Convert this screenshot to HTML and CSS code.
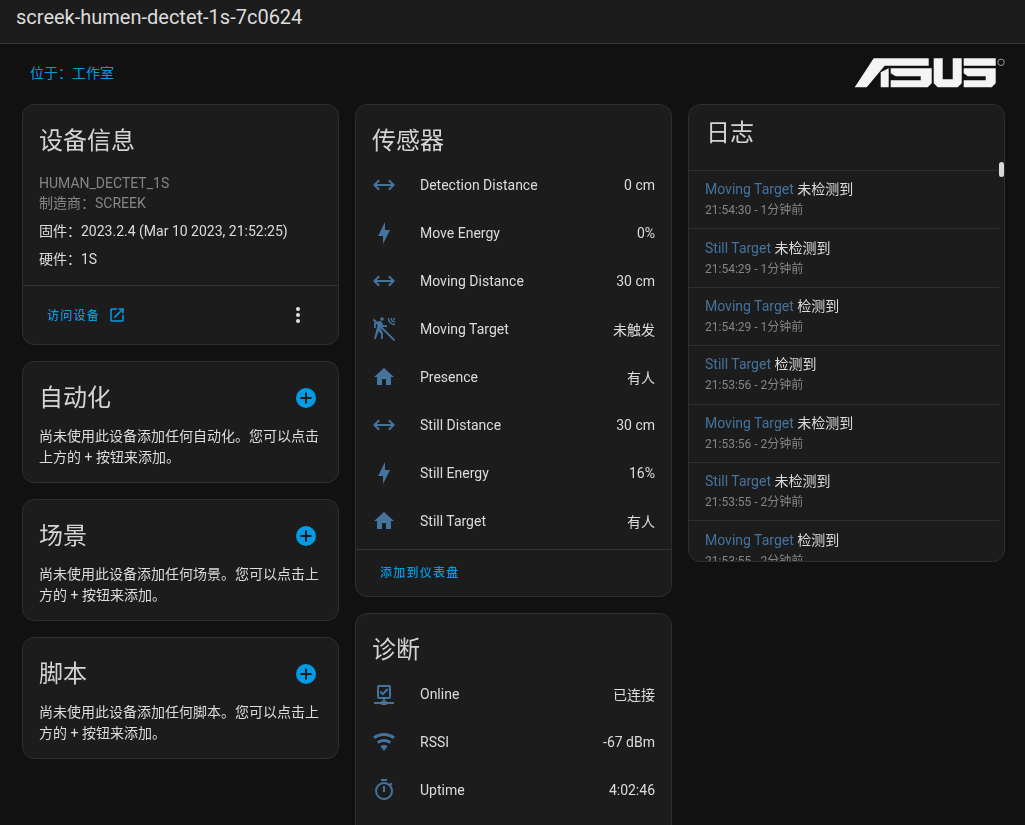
FILE: index.html
```html
<!DOCTYPE html>
<html lang="zh-CN">
<head>
    <meta charset="UTF-8">
    <meta name="viewport" content="width=device-width, initial-scale=1.0">
    <title>screek-humen-dectet-1s-7c0624</title>
    <link rel="stylesheet" href="styles.css">
</head>
<body>
    <header class="topbar">screek-humen-dectet-1s-7c0624</header>
    <div class="subbar">
        <a class="area">位于：工作室</a>
        <svg class="logo" viewBox="0 0 152 31">
            <g fill="#f4f4f4" transform="translate(.7 1.3)">
                <polygon points="0,29 12,29 30,7.500 74,7.500 74,0 19,0"/>
                <polygon points="26,14 34,10 34,29 26,29"/>
                <polygon points="36,10 77,10 77,25 73,29 36,29 36,22 66,22 66,18 41,18 36,15"/>
                <polygon points="79,0 88,0 88,21 98,21 98,0 107,0 107,25 103,29 83,29 79,25"/>
                <polygon points="109,0 141,0 141,7.500 109,7.500"/>
                <polygon points="109,10 141,10 141,25 137,29 109,29 109,22 131,22 131,18 113,18 109,15"/>
            </g>
            <circle cx="147" cy="5.300" r="3.200" fill="none" stroke="#999" stroke-width="1"/>
        </svg>
    </div>
    <main class="columns">
        <div class="column">
            <section class="card">
                <h2 class="card-title">设备信息</h2>
                <div class="info">
                    <div class="muted">HUMAN_DECTET_1S</div>
                    <div class="muted">制造商：SCREEK</div>
                    <div class="info-line">固件：2023.2.4 (Mar 10 2023, 21:52:25)</div>
                    <div class="info-line">硬件：1S</div>
                </div>
                <div class="actions actions-device">
                    <a class="btn">访问设备
                        <svg class="icon-open" viewBox="0 0 24 24"><path d="M14,3V5H17.59L7.76,14.83L9.17,16.24L19,6.41V10H21V3M19,19H5V5H12V3H5C3.89,3 3,3.9 3,5V19A2,2 0 0,0 5,21H19A2,2 0 0,0 21,19V12H19V19Z"/></svg>
                    </a>
                    <svg class="icon-more" viewBox="0 0 24 24"><path d="M12,16A2,2 0 0,1 14,18A2,2 0 0,1 12,20A2,2 0 0,1 10,18A2,2 0 0,1 12,16M12,10A2,2 0 0,1 14,12A2,2 0 0,1 12,14A2,2 0 0,1 10,12A2,2 0 0,1 12,10M12,4A2,2 0 0,1 14,6A2,2 0 0,1 12,8A2,2 0 0,1 10,6A2,2 0 0,1 12,4Z"/></svg>
                </div>
            </section>
            <section class="card empty-card">
                <div class="empty-head">
                    <h2 class="card-title">自动化</h2>
                    <svg class="icon-add" viewBox="0 0 20 20"><circle cx="10" cy="10" r="10"/><path d="M9 4.5h2V9h4.5v2H11v4.5H9V11H4.500V9H9z"/></svg>
                </div>
                <p class="empty-text">尚未使用此设备添加任何自动化。您可以点击上方的 + 按钮来添加。</p>
            </section>
            <section class="card empty-card">
                <div class="empty-head">
                    <h2 class="card-title">场景</h2>
                    <svg class="icon-add" viewBox="0 0 20 20"><circle cx="10" cy="10" r="10"/><path d="M9 4.5h2V9h4.5v2H11v4.5H9V11H4.500V9H9z"/></svg>
                </div>
                <p class="empty-text">尚未使用此设备添加任何场景。您可以点击上方的 + 按钮来添加。</p>
            </section>
            <section class="card empty-card">
                <div class="empty-head">
                    <h2 class="card-title">脚本</h2>
                    <svg class="icon-add" viewBox="0 0 20 20"><circle cx="10" cy="10" r="10"/><path d="M9 4.5h2V9h4.5v2H11v4.5H9V11H4.500V9H9z"/></svg>
                </div>
                <p class="empty-text">尚未使用此设备添加任何脚本。您可以点击上方的 + 按钮来添加。</p>
            </section>
        </div>

        <div class="column">
            <section class="card">
                <h2 class="card-title">传感器</h2>
                <div class="rows">
                    <div class="row">
                        <svg class="row-icon" viewBox="0 0 24 24"><path d="M6.45,17.45L1,12L6.45,6.55L7.86,7.96L4.83,11H19.17L16.14,7.96L17.55,6.55L23,12L17.55,17.45L16.14,16.04L19.17,13H4.83L7.86,16.04L6.45,17.45Z"/></svg>
                        <span class="row-name">Detection Distance</span><span class="row-value">0 cm</span>
                    </div>
                    <div class="row">
                        <svg class="row-icon" viewBox="0 0 24 24"><path d="M11 15H6L13 1V9H18L11 23V15Z"/></svg>
                        <span class="row-name">Move Energy</span><span class="row-value">0%</span>
                    </div>
                    <div class="row">
                        <svg class="row-icon" viewBox="0 0 24 24"><path d="M6.45,17.45L1,12L6.45,6.55L7.86,7.96L4.83,11H19.17L16.14,7.96L17.55,6.55L23,12L17.55,17.45L16.14,16.04L19.17,13H4.83L7.86,16.04L6.45,17.45Z"/></svg>
                        <span class="row-name">Moving Distance</span><span class="row-value">30 cm</span>
                    </div>
                    <div class="row">
                        <svg class="row-icon" viewBox="0 0 24 24"><path d="M10 .2C9 .2 8.200 1 8.200 2S9 3.800 10 3.800 11.800 3 11.800 2 11 .2 10 .2M15.670 1A7.330 7.330 0 0 0 23 8.330V7A6 6 0 0 1 17 1H15.670M18.330 1C18.330 3.580 20.420 5.670 23 5.670V4.330C21.160 4.330 19.670 2.840 19.670 1H18.330M21 1A2 2 0 0 0 23 3V1H21M7.920 4.030C7.750 4.030 7.600 4.050 7.460 4.100L2 5.800V11H3.800V7.330L5.910 6.670L2 22H3.800L6.670 13.890L9 17V22H10.800V15.590L8.310 11.050L9.040 8.180L10.120 10H15V8.200H11.380L9.380 4.870C9.080 4.370 8.540 4.030 7.920 4.030Z"/><path d="M1.500 2.500L22.500 23.500" class="slash"/></svg>
                        <span class="row-name">Moving Target</span><span class="row-value">未触发</span>
                    </div>
                    <div class="row">
                        <svg class="row-icon" viewBox="0 0 24 24"><path d="M10,20V14H14V20H19V12H22L12,3L2,12H5V20H10Z"/></svg>
                        <span class="row-name">Presence</span><span class="row-value">有人</span>
                    </div>
                    <div class="row">
                        <svg class="row-icon" viewBox="0 0 24 24"><path d="M6.45,17.45L1,12L6.45,6.55L7.86,7.96L4.83,11H19.17L16.14,7.96L17.55,6.55L23,12L17.55,17.45L16.14,16.04L19.17,13H4.83L7.86,16.04L6.45,17.45Z"/></svg>
                        <span class="row-name">Still Distance</span><span class="row-value">30 cm</span>
                    </div>
                    <div class="row">
                        <svg class="row-icon" viewBox="0 0 24 24"><path d="M11 15H6L13 1V9H18L11 23V15Z"/></svg>
                        <span class="row-name">Still Energy</span><span class="row-value">16%</span>
                    </div>
                    <div class="row">
                        <svg class="row-icon" viewBox="0 0 24 24"><path d="M10,20V14H14V20H19V12H22L12,3L2,12H5V20H10Z"/></svg>
                        <span class="row-name">Still Target</span><span class="row-value">有人</span>
                    </div>
                </div>
                <div class="actions actions-sensor">
                    <a class="btn">添加到仪表盘</a>
                </div>
            </section>
            <section class="card diag-card">
                <h2 class="card-title">诊断</h2>
                <div class="rows">
                    <div class="row">
                        <svg class="row-icon" viewBox="0 0 24 24"><path d="M15,20A1,1 0 0,0 14,19H13V17H17A2,2 0 0,0 19,15V5A2,2 0 0,0 17,3H7A2,2 0 0,0 5,5V15A2,2 0 0,0 7,17H11V19H10A1,1 0 0,0 9,20H2V22H9A1,1 0 0,0 10,23H14A1,1 0 0,0 15,22H22V20H15M7,15V5H17V15H7M10.750,13.500L7.500,10.250L8.900,8.830L10.750,10.670L15.100,6.340L16.500,7.750L10.750,13.500Z"/></svg>
                        <span class="row-name">Online</span><span class="row-value">已连接</span>
                    </div>
                    <div class="row">
                        <svg class="row-icon" viewBox="0 0 24 24"><path d="M12,21L15.6,16.2C14.6,15.45 13.35,15 12,15C10.65,15 9.4,15.45 8.4,16.2L12,21M12,3C7.95,3 4.21,4.34 1.2,6.6L3,9C5.5,7.12 8.62,6 12,6C15.38,6 18.5,7.12 21,9L22.8,6.6C19.79,4.34 16.05,3 12,3M12,9C9.3,9 6.81,9.89 4.8,11.4L6.6,13.8C8.1,12.67 9.97,12 12,12C14.03,12 15.9,12.67 17.4,13.8L19.2,11.4C17.19,9.89 14.7,9 12,9Z"/></svg>
                        <span class="row-name">RSSI</span><span class="row-value">-67 dBm</span>
                    </div>
                    <div class="row">
                        <svg class="row-icon" viewBox="0 0 24 24"><path d="M12,20A7,7 0 0,1 5,13A7,7 0 0,1 12,6A7,7 0 0,1 19,13A7,7 0 0,1 12,20M19.03,7.39L20.45,5.97C20,5.46 19.55,5 19.04,4.56L17.62,6C16.07,4.74 14.12,4 12,4A9,9 0 0,0 3,13A9,9 0 0,0 12,22C17,22 21,17.97 21,13C21,10.88 20.26,8.93 19.03,7.39M11,14H13V8H11M15,1H9V3H15V1Z"/></svg>
                        <span class="row-name">Uptime</span><span class="row-value">4:02:46</span>
                    </div>
                </div>
            </section>
        </div>

        <div class="column">
            <section class="card log-card">
                <h2 class="card-title log-title">日志</h2>
                <div class="scrollbar"></div>
                <div class="log-list">
                    <div class="log-item"><div><span class="log-name">Moving Target</span> 未检测到</div><div class="log-time">21:54:30 - 1分钟前</div></div>
                    <div class="log-item"><div><span class="log-name">Still Target</span> 未检测到</div><div class="log-time">21:54:29 - 1分钟前</div></div>
                    <div class="log-item"><div><span class="log-name">Moving Target</span> 检测到</div><div class="log-time">21:54:29 - 1分钟前</div></div>
                    <div class="log-item"><div><span class="log-name">Still Target</span> 检测到</div><div class="log-time">21:53:56 - 2分钟前</div></div>
                    <div class="log-item"><div><span class="log-name">Moving Target</span> 未检测到</div><div class="log-time">21:53:56 - 2分钟前</div></div>
                    <div class="log-item"><div><span class="log-name">Still Target</span> 未检测到</div><div class="log-time">21:53:55 - 2分钟前</div></div>
                    <div class="log-item"><div><span class="log-name">Moving Target</span> 检测到</div><div class="log-time">21:53:55 - 2分钟前</div></div>
                </div>
            </section>
        </div>
    </main>
</body>
</html>
```

FILE: styles.css
```css
html, body {
    height: 100%;
    overflow: hidden;
}
body {
    margin: 0;
    background: #111111;
    color: #dcdcdc;
    font-family: Roboto, "Noto Sans CJK SC", sans-serif;
    font-size: 14px;
}
.topbar {
    height: 43px;
    padding: 0 16px;
    background: #1c1c1c;
    border-bottom: 1px solid #333333;
    font-size: 20px;
    line-height: 34px;
}
.subbar {
    display: flex;
    justify-content: space-between;
    align-items: center;
    box-sizing: border-box;
    height: 60px;
    padding: 0 19px 3px 30px;
}
.area {
    padding-bottom: 2px;
    color: #039be5;
}
.logo {
    width: 152px;
    height: 31px;
}
.columns {
    display: flex;
    gap: 16px;
    align-items: flex-start;
    padding: 0 20px 0 22px;
    will-change: transform;
}
.column {
    width: 317px;
    display: flex;
    flex-direction: column;
    gap: 16px;
}
.card {
    background: #1c1c1c;
    border: 1px solid #2e2e2e;
    border-radius: 12px;
}
.card-title {
    margin: 0;
    padding: 16px 16px 0;
    height: 40px;
    color: #d4d4d4;
    font-size: 24px;
    font-weight: 400;
    line-height: 40px;
}
.info {
    padding: 12px 16px 16px;
    line-height: 20px;
}
.muted {
    color: #858585;
}
.info-line {
    margin-top: 8px;
}
.actions {
    display: flex;
    justify-content: space-between;
    align-items: center;
    border-top: 1px solid #333333;
    box-sizing: border-box;
}
.actions-device {
    height: 59px;
    padding: 0 30px 1px 24px;
}
.actions-sensor {
    height: 47px;
    margin-top: 4px;
    padding: 0 24px 4px;
}
.btn {
    display: flex;
    align-items: center;
    gap: 8px;
    color: #039be5;
    font-size: 12px;
    font-weight: 500;
    letter-spacing: 1.25px;
}
.icon-open {
    width: 18px;
    height: 18px;
    fill: #039be5;
}
.icon-more {
    width: 24px;
    height: 24px;
    fill: #e1e1e1;
    margin-right: -2px;
}
.empty-card {
    height: 120px;
}
.empty-head {
    display: flex;
    justify-content: space-between;
    align-items: center;
}
.icon-add {
    width: 20px;
    height: 20px;
    margin: 16px 22px 0 0;
    fill: #1c1c1c;
}
.icon-add circle {
    fill: #039be5;
}
.empty-text {
    margin: 8px 0 0;
    padding: 0 16px;
    line-height: 21px;
}
.row {
    display: flex;
    align-items: center;
    height: 48px;
    padding: 0 16px;
}
.row-icon {
    width: 24px;
    height: 24px;
    fill: #44739e;
    margin-right: 24px;
    flex: none;
}
.slash {
    fill: none;
    stroke: #44739e;
    stroke-width: 1.8;
}
.row-name {
    flex: 1;
}
.diag-card {
    padding-bottom: 48px;
}
.log-card {
    position: relative;
    height: 456px;
    overflow: hidden;
}
.log-title {
    padding: 8px 17px 0;
    height: 57px;
    border-bottom: 1px solid #2e2e2e;
}
.scrollbar {
    position: absolute;
    top: 57px;
    right: 0;
    width: 5px;
    height: 15px;
    border-radius: 3px;
    background: #d8d8d8;
}
.log-list {
    margin-right: 5px;
}
.log-item {
    box-sizing: border-box;
    height: 58.4px;
    padding: 8.3px 16px 0;
    border-bottom: 1px solid #2e2e2e;
    line-height: 20px;
}
.log-name {
    color: #44739e;
}
.log-time {
    margin-top: 1px;
    color: #858585;
    font-size: 12px;
}
```
